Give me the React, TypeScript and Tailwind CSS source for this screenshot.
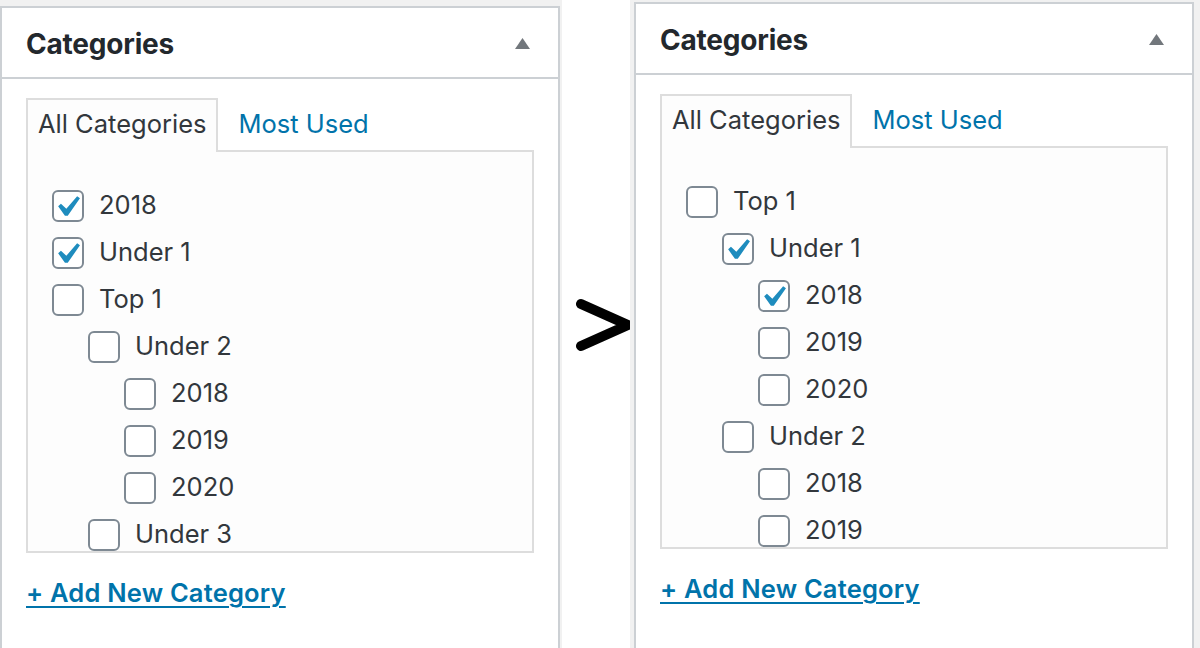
import React from "react";

type Item = { label: string; level: 0 | 1 | 2; checked?: boolean };

const leftItems: Item[] = [
  { label: "2018", level: 0, checked: true },
  { label: "Under 1", level: 0, checked: true },
  { label: "Top 1", level: 0 },
  { label: "Under 2", level: 1 },
  { label: "2018", level: 2 },
  { label: "2019", level: 2 },
  { label: "2020", level: 2 },
  { label: "Under 3", level: 1 },
];

const rightItems: Item[] = [
  { label: "Top 1", level: 0 },
  { label: "Under 1", level: 1, checked: true },
  { label: "2018", level: 2, checked: true },
  { label: "2019", level: 2 },
  { label: "2020", level: 2 },
  { label: "Under 2", level: 1 },
  { label: "2018", level: 2 },
  { label: "2019", level: 2 },
];

const indent: Record<number, string> = {
  0: "pl-[0px]",
  1: "pl-[36px]",
  2: "pl-[72px]",
};

function Checkbox({ checked }: { checked?: boolean }) {
  return (
    <span className="relative block w-[32px] h-[32px] shrink-0 rounded-[6px] border-2 border-[#7e8993] bg-white">
      {checked && (
        <svg
          viewBox="0 0 20 20"
          className="absolute left-[-8px] top-[-6px] w-[42px] h-[42px]"
        >
          <path
            d="M14.83 4.89l1.34.94-5.81 8.38H9.02L5.78 9.67l1.34-1.25 2.57 2.4z"
            fill="#1e8cbe"
          />
        </svg>
      )}
    </span>
  );
}

function Panel({ items }: { items: Item[] }) {
  return (
    <div className="flex flex-col w-[560px] h-full border-2 border-b-0 border-[#ccd0d4] bg-white font-['Inter',sans-serif]">
      <div className="flex items-center justify-between h-[71px] pl-[24px] pr-[28px] border-b-2 border-[#ccd0d4]">
        <h2 className="text-[28px] font-bold text-[#23282d] tracking-[-0.2px] mt-[2px]">Categories</h2>
        <svg width="15" height="11" viewBox="0 0 15 11" className="mt-[1px]">
          <polygon points="0,11 7.5,0 15,11" fill="#72777c" />
        </svg>
      </div>
      <div className="px-[24px] pt-[19px]">
        <div className="flex items-start">
          <div className="relative z-10 h-[54px] mb-[-2px] px-[10px] border-2 border-b-0 border-[#dddddd] bg-[#fdfdfd] flex items-center pb-[4px] text-[25.5px] text-[#32373c]">
            All Categories
          </div>
          <div className="h-[52px] ml-[20px] flex items-center pb-[0px] text-[25.5px] text-[#0073aa]">
            Most Used
          </div>
        </div>
        <div className="h-[403px] border-2 border-[#dddddd] bg-[#fdfdfd] overflow-hidden pt-[30px] pl-[24px]">
          {items.map((it, i) => (
            <div key={i} className={`flex items-center h-[47px] ${indent[it.level]}`}>
              <Checkbox checked={it.checked} />
              <span className="ml-[15px] text-[25.5px] text-[#32373c]">{it.label}</span>
            </div>
          ))}
        </div>
        <div className="pt-[21px]">
          <span className="text-[25.5px] font-semibold text-[#0073aa] underline decoration-2 underline-offset-[4px] tracking-[0.2px]">
            + Add New Category
          </span>
        </div>
      </div>
    </div>
  );
}

export default function App() {
  return (
    <div className="flex w-[1200px] h-[648px] bg-white overflow-hidden">
      <div className="w-[562px] h-full bg-[#f1f1f1] pt-[6px] shrink-0">
        <Panel items={leftItems} />
      </div>
      <div className="w-[68px] h-full shrink-0 bg-white pt-[298px] overflow-hidden">
        <svg width="68" height="56" viewBox="0 0 68 56">
          <polyline
            points="19,6 66,27 19,48"
            fill="none"
            stroke="#000"
            strokeWidth="10"
            strokeLinecap="round"
            strokeLinejoin="miter"
          />
        </svg>
      </div>
      <div className="w-[570px] h-full bg-[#f1f1f1] pl-[4px] pt-[2px] shrink-0">
        <Panel items={rightItems} />
      </div>
    </div>
  );
}
